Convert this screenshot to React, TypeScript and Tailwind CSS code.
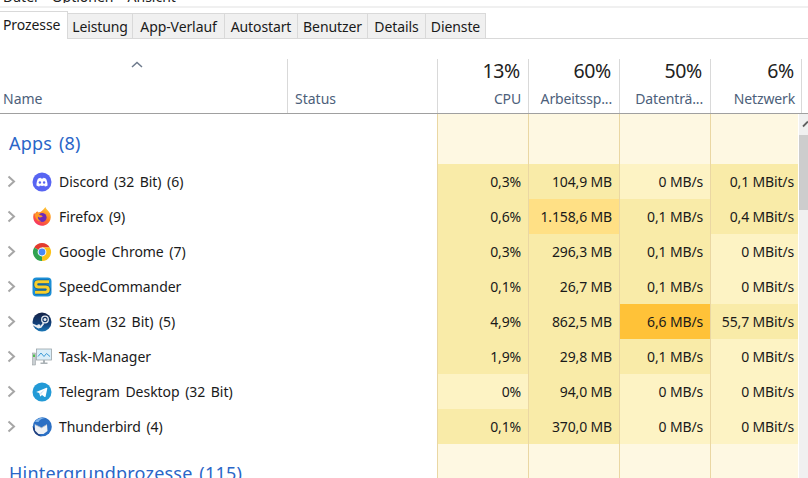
import React from "react";

const L = "bg-[#fdf3c4]";
const M = "bg-[#f9eba8]";
const S = "bg-[#ffe085]";
const O = "bg-[#ffc238]";

const Sep = () => <div className="w-px shrink-0 bg-[#ead7a3]" />;

function Discord() {
  return (
    <svg width="20" height="20" viewBox="0 0 20 20">
      <circle cx="10" cy="10" r="9.5" fill="#5865f2" />
      <path d="M4.4 13.4c0-3 .9-5.8 1.900-6.900 1-.5 1.800-.7 2.300-.7l.3.6h2.200l.3-.6c.5 0 1.300.2 2.300.7 1 1.100 1.900 3.900 1.900 6.900-.9.7-1.800 1.100-2.700 1.200l-.6-1c-1.600.5-2.800.5-4.400 0l-.6 1c-.9-.1-1.800-.5-2.700-1.200z" fill="#fff" />
      <ellipse cx="7.900" cy="10.500" rx="1.200" ry="1.350" fill="#5865f2" />
      <ellipse cx="12.100" cy="10.500" rx="1.200" ry="1.350" fill="#5865f2" />
    </svg>
  );
}
function Firefox() {
  return (
    <svg width="20" height="20" viewBox="0 0 20 20">
      <defs>
        <linearGradient id="ff" x1="0.8" y1="0" x2="0.2" y2="1">
          <stop offset="0" stopColor="#ffd23a" />
          <stop offset="0.5" stopColor="#ff7a1f" />
          <stop offset="1" stopColor="#f5286e" />
        </linearGradient>
      </defs>
      <path d="M13.500 0c.3 2 1.800 2.800 3.200 4.400 2 2.300 2.600 5 1.700 8-1 3.600-4.400 6.300-8.400 6.300-4.600 0-8.800-3.700-8.800-8.600 0-1.700.3-3.200 1-4.600.1.800.4 1.300.8 1.700.3-1.300 1.300-2.400 2.600-3 0 .8.3 1.200 1 1.600 1.700-.2 3.800-1.800 6.900-5.800z" fill="url(#ff)" />
      <circle cx="10" cy="10.500" r="4.600" fill="#6c2bb8" />
      <path d="M2.500 8c2-2.500 5-3.200 6.500-2.200-1 .5-1.500 1.200-1.800 2.200 1.800.3 3.200.6 3.600 1.500-2 1-3.800 1.800-4.800 0-.5 1.600.5 4 3.500 4.800-3 .8-6.500-2.500-6.500-6.300z" fill="#ff9a26" />
    </svg>
  );
}
function Chrome() {
  return (
    <svg width="20" height="20" viewBox="0 0 20 20">
      <path d="M10 10 2.200 5.500A9 9 0 0 1 17.800 5.500H10z" fill="#e33b2e" />
      <path d="M10 10 2.200 5.500A9 9 0 0 0 10 19z" fill="#2fa24f" />
      <path d="M10 10V19A9 9 0 0 0 17.800 5.500H10z" fill="#fbc116" />
      <circle cx="10" cy="10" r="4.400" fill="#fff" />
      <circle cx="10" cy="10" r="3.400" fill="#4a8af4" />
    </svg>
  );
}
function Speed() {
  return (
    <svg width="20" height="20" viewBox="0 0 20 20">
      <rect x="0.500" y="0.500" width="19" height="19" rx="4" fill="#1c8fd6" />
      <path d="M17 4.800H6.300C2.900 4.800 2.900 10 6.300 10h7.400c3.400 0 3.400 5.200 0 5.200H3" fill="none" stroke="#0b5f9e" strokeWidth="4.800" />
      <path d="M17 4.800H6.300C2.900 4.800 2.900 10 6.300 10h7.400c3.400 0 3.400 5.200 0 5.200H3" fill="none" stroke="#f8cf2a" strokeWidth="3" />
    </svg>
  );
}
function Steam() {
  return (
    <svg width="20" height="20" viewBox="0 0 20 20">
      <defs>
        <linearGradient id="st" x1="0.500" y1="0" x2="0.500" y2="1">
          <stop offset="0" stopColor="#152347" />
          <stop offset="0.600" stopColor="#11407a" />
          <stop offset="1" stopColor="#1a78b8" />
        </linearGradient>
      </defs>
      <circle cx="10" cy="10" r="9.500" fill="url(#st)" />
      <path d="M0.500 11.500 6 13.800l1.800 1.200 3-4.200 1.500 1-3 4-3 .6L1 13.500z" fill="#e8edf2" />
      <circle cx="13" cy="7.500" r="3.300" fill="none" stroke="#e8edf2" strokeWidth="1.300" />
      <circle cx="13" cy="7.500" r="1.500" fill="#e8edf2" />
      <circle cx="6.800" cy="14" r="1.800" fill="#e8edf2" />
    </svg>
  );
}
function Task() {
  return (
    <svg width="20" height="20" viewBox="0 0 20 20">
      <rect x="0.500" y="6" width="3" height="12" fill="#c9cfd2" stroke="#8f9699" strokeWidth="0.500" />
      <rect x="1" y="7.500" width="2" height="2.500" fill="#4fc04f" />
      <rect x="4.500" y="2" width="15" height="11" fill="#dbeef9" stroke="#9aa3a8" strokeWidth="0.800" />
      <path d="M6 9.500 9 6l3 3.500 2.500-3 3.500 3" fill="none" stroke="#3d9bd6" strokeWidth="1" />
      <path d="M11 13h2v2.500h2.500V17h-7v-1.500H11z" fill="#aab1b5" />
    </svg>
  );
}
function Telegram() {
  return (
    <svg width="20" height="20" viewBox="0 0 20 20">
      <circle cx="10" cy="10" r="9.500" fill="#239ad6" />
      <path d="M4.200 9.900 14.500 5.700c.5-.2.900.1.800.8l-1.700 8c-.1.600-.5.700-1 .4l-2.600-1.900-1.300 1.200c-.3.300-.5.300-.6-.1l-.9-3z" fill="#fff" />
      <path d="M8.200 11l4.800-3.400-3.700 4.200-.3 2z" fill="#c5dff0" />
    </svg>
  );
}
function Thunderbird() {
  return (
    <svg width="20" height="20" viewBox="0 0 20 20">
      <circle cx="10.300" cy="9.700" r="9.500" fill="#2a6fc4" />
      <path d="M3 5C5 1.500 9 .2 13 1c-3 .3-5 1.500-6.500 4z" fill="#7fb3e8" />
      <path d="M.8 9C.5 14 4 19.500 10 19.500c-2-1-3-2-3.500-3.500z" fill="#21407f" />
      <path d="M2.800 7.500 9.500 10.800l5.500-3.300.5 6.500-4 3H6.500L3 13.500z" fill="#eef1f5" />
      <path d="M2.800 7.500 9.500 10.800l5.500-3.300" fill="none" stroke="#aeb7c3" strokeWidth="0.800" />
    </svg>
  );
}

function Chevron() {
  return (
    <svg width="10" height="13" viewBox="0 0 10 13" className="shrink-0">
      <path d="M2.500 1.500 8 6.500l-5.500 5" fill="none" stroke="#a6a6a6" strokeWidth="2" />
    </svg>
  );
}

const rows: { name: string; icon: React.ReactNode; cells: [string, string][] }[] = [
  { name: "Discord (32 Bit) (6)", icon: <Discord />, cells: [["0,3%", M], ["104,9 MB", M], ["0 MB/s", L], ["0,1 MBit/s", M]] },
  { name: "Firefox (9)", icon: <Firefox />, cells: [["0,6%", M], ["1.158,6 MB", S], ["0,1 MB/s", M], ["0,4 MBit/s", M]] },
  { name: "Google Chrome (7)", icon: <Chrome />, cells: [["0,3%", M], ["296,3 MB", M], ["0,1 MB/s", M], ["0 MBit/s", L]] },
  { name: "SpeedCommander", icon: <Speed />, cells: [["0,1%", M], ["26,7 MB", M], ["0,1 MB/s", M], ["0 MBit/s", L]] },
  { name: "Steam (32 Bit) (5)", icon: <Steam />, cells: [["4,9%", M], ["862,5 MB", M], ["6,6 MB/s", O], ["55,7 MBit/s", M]] },
  { name: "Task-Manager", icon: <Task />, cells: [["1,9%", M], ["29,8 MB", M], ["0,1 MB/s", M], ["0 MBit/s", L]] },
  { name: "Telegram Desktop (32 Bit)", icon: <Telegram />, cells: [["0%", L], ["94,0 MB", M], ["0 MB/s", L], ["0 MBit/s", L]] },
  { name: "Thunderbird (4)", icon: <Thunderbird />, cells: [["0,1%", M], ["370,0 MB", M], ["0 MB/s", L], ["0 MBit/s", L]] },
];

const tabs: [string, string][] = [
  ["Leistung", "w-[65px]"],
  ["App-Verlauf", "w-[92px]"],
  ["Autostart", "w-[73px]"],
  ["Benutzer", "w-[70px]"],
  ["Details", "w-[58px]"],
  ["Dienste", "w-[60px]"],
];

const heads: [string, string, string][] = [
  ["13%", "CPU", "pr-[7px]"],
  ["60%", "Arbeitssp...", "pr-[7px]"],
  ["50%", "Datenträ...", "pr-[7px]"],
  ["6%", "Netzwerk", "pr-[6px]"],
];

const Blank = () => (
  <div className="flex h-[50px]">
    <div className="w-[437px]" />
    {[0, 1, 2, 3].map((i) => (
      <React.Fragment key={i}>
        <Sep />
        <div className={i === 3 ? "w-[87px] bg-[#fef8e2]" : "w-[90px] bg-[#fef8e2]"} />
      </React.Fragment>
    ))}
  </div>
);

export default function App() {
  return (
    <div className="h-[478px] w-[808px] overflow-hidden bg-white text-[14px] text-[#1a1a1a] [font-family:'Noto_Sans',sans-serif]">
      {/* menu strip */}
      <div className="flex h-[3px] items-end gap-[14px] overflow-hidden pl-[3px] leading-[12px] text-[#222]">
        <span className="shrink-0">Datei</span>
        <span className="shrink-0">Optionen</span>
        <span className="shrink-0">Ansicht</span>
      </div>
      <div className="mt-[3px] h-[2px] bg-[#f0f0f0]" />

      {/* tabs */}
      <div className="flex h-[31px] items-end border-b border-[#d9d9d9]">
        <div className="relative z-10 -mb-px h-[28px] w-[68px] border-r border-t border-[#d9d9d9] bg-white pl-[3px] pt-[2px] tracking-[-0.1px]">
          Prozesse
        </div>
        {tabs.map(([t, w]) => (
          <div key={t} className={`flex h-[25px] items-center justify-center border-r border-t border-[#d9d9d9] bg-[#f0f0f0] tracking-[-0.1px] ${w}`}>
            {t}
          </div>
        ))}
      </div>

      {/* header */}
      <div className="flex h-[75px] border-b border-[#a0a0a0] pt-[20px]">
        <div className="relative flex w-[287px] items-end pb-[4px] pl-[3px] text-[#4c607a]">
          <svg width="12" height="7" viewBox="0 0 12 7" className="absolute left-[131px] top-[2px]">
            <path d="M1 6 6 1.500 11 6" fill="none" stroke="#6d7a8c" strokeWidth="1.500" />
          </svg>
          Name
        </div>
        <div className="w-px bg-[#d9d9d9]" />
        <div className="flex w-[149px] items-end pb-[4px] pl-[7px] text-[#4c607a]">Status</div>
        {heads.map(([p, l, pr]) => (
          <React.Fragment key={l}>
            <div className="w-px bg-[#d9d9d9]" />
            <div className={`flex w-[90px] flex-col items-end justify-between pb-[4px] ${pr}`}>
              <span className="mr-px text-[19.5px] leading-[24px] tracking-[-0.3px] text-[#222]">{p}</span>
              <span className="whitespace-nowrap tracking-[-0.15px] text-[#4c607a]">{l}</span>
            </div>
          </React.Fragment>
        ))}
        <div className="w-px bg-[#d9d9d9]" />
      </div>

      {/* body */}
      <div className="relative">
        <Blank />
        <div className="absolute left-[9px] top-[16px] text-[18px] leading-[26px] tracking-[0.2px] text-[#2a66c8] [word-spacing:2px]">Apps (8)</div>

        {rows.map((r) => (
          <div key={r.name} className="flex h-[35px]">
            <div className="flex w-[437px] items-center">
              <div className="ml-[6px] w-[26px]"><Chevron /></div>
              <div className="w-[27px]">{r.icon}</div>
              <span className="pb-[1px] tracking-[-0.05px] [word-spacing:2px]">{r.name}</span>
            </div>
            {r.cells.map(([v, c], i) => (
              <React.Fragment key={i}>
                <Sep />
                <div className={`flex items-center justify-end whitespace-nowrap pb-[1px] tracking-[-0.15px] ${i === 3 ? "w-[87px] pr-[4px]" : "w-[90px] pr-[7px]"} ${c}`}>{v}</div>
              </React.Fragment>
            ))}
          </div>
        ))}

        <div className="relative">
          <Blank />
          <div className="absolute left-[9px] top-[16px] whitespace-nowrap text-[18px] leading-[26px] tracking-[0.2px] text-[#2a66c8] [word-spacing:2px]">Hintergrundprozesse (115)</div>
        </div>

        {/* scrollbar */}
        <div className="absolute bottom-0 right-0 top-0 w-[9px] bg-[#f0f0f0]">
          <svg width="9" height="21" viewBox="0 0 9 21" className="block">
            <path d="M4 12.500 9 7.500" fill="none" stroke="#606060" strokeWidth="1.800" />
          </svg>
          <div className="h-[75px] bg-[#cdcdcd]" />
        </div>
      </div>
    </div>
  );
}
